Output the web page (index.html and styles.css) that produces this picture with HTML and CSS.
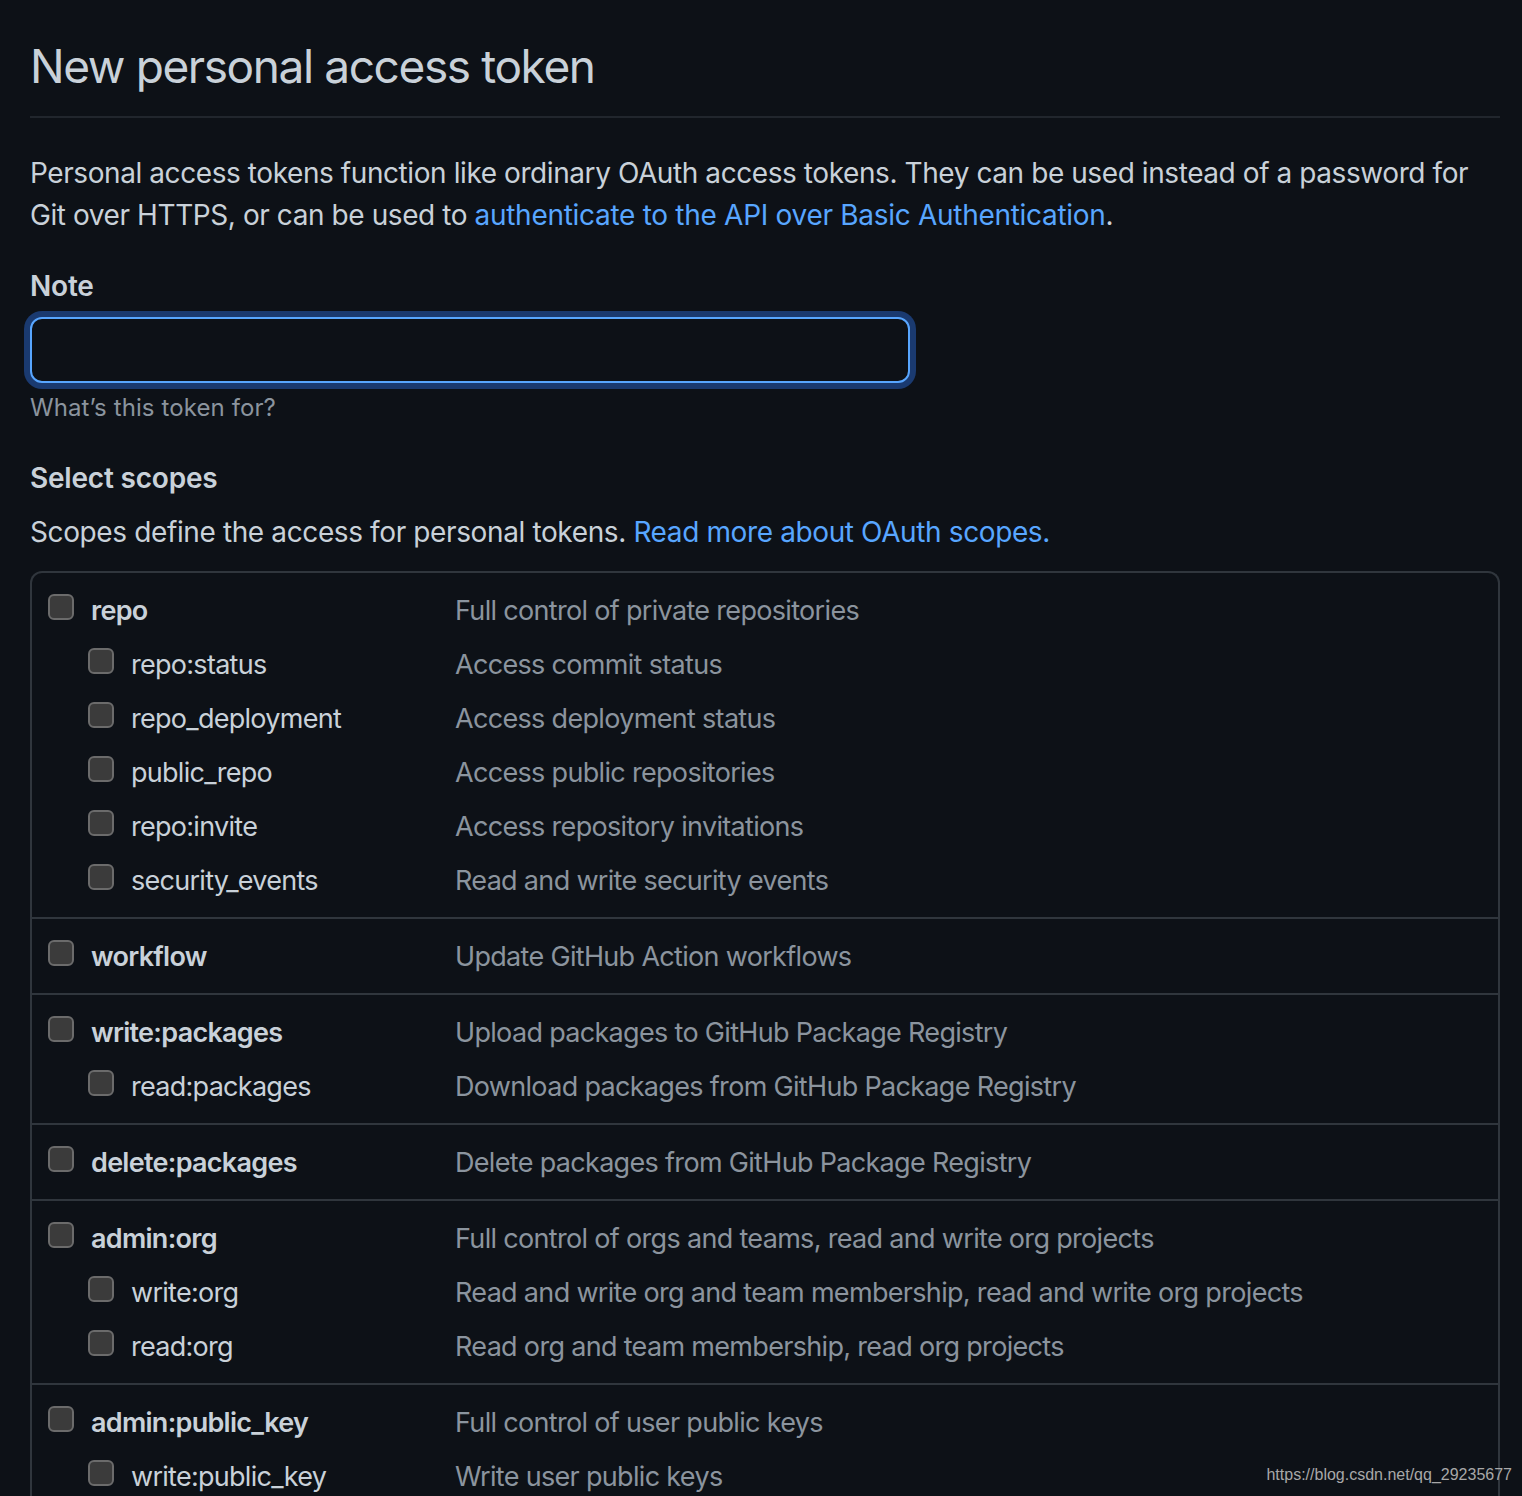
FILE: index.html
```html
<!DOCTYPE html>
<html lang="en">
<head>
<meta charset="utf-8">
<title>New personal access token</title>
<link rel="stylesheet" href="styles.css">
</head>
<body>
<main class="page">
  <h1 class="title">New personal access token</h1>
  <p class="intro">Personal access tokens function like ordinary OAuth access tokens. They can be used instead of a password for Git over HTTPS, or can be used to <a class="intro-link" href="#">authenticate to the API over Basic Authentication</a>.</p>

  <div class="field">
    <label class="label" for="note">Note</label>
    <input class="input" id="note" type="text">
    <p class="hint">What’s this token for?</p>
  </div>

  <h2 class="label scopes-title">Select scopes</h2>
  <p class="scopes-text">Scopes define the access for personal tokens. <a href="#">Read more about OAuth scopes.</a></p>

  <div class="scopes">
    <div class="group">
      <div class="row"><span class="cb"></span><span class="name main">repo</span><span class="desc">Full control of private repositories</span></div>
      <div class="row sub"><span class="cb"></span><span class="name">repo:status</span><span class="desc">Access commit status</span></div>
      <div class="row sub"><span class="cb"></span><span class="name">repo_deployment</span><span class="desc">Access deployment status</span></div>
      <div class="row sub"><span class="cb"></span><span class="name">public_repo</span><span class="desc">Access public repositories</span></div>
      <div class="row sub"><span class="cb"></span><span class="name">repo:invite</span><span class="desc">Access repository invitations</span></div>
      <div class="row sub"><span class="cb"></span><span class="name">security_events</span><span class="desc">Read and write security events</span></div>
    </div>
    <div class="group">
      <div class="row"><span class="cb"></span><span class="name main">workflow</span><span class="desc">Update GitHub Action workflows</span></div>
    </div>
    <div class="group">
      <div class="row"><span class="cb"></span><span class="name main">write:packages</span><span class="desc">Upload packages to GitHub Package Registry</span></div>
      <div class="row sub"><span class="cb"></span><span class="name">read:packages</span><span class="desc">Download packages from GitHub Package Registry</span></div>
    </div>
    <div class="group">
      <div class="row"><span class="cb"></span><span class="name main">delete:packages</span><span class="desc">Delete packages from GitHub Package Registry</span></div>
    </div>
    <div class="group">
      <div class="row"><span class="cb"></span><span class="name main">admin:org</span><span class="desc">Full control of orgs and teams, read and write org projects</span></div>
      <div class="row sub"><span class="cb"></span><span class="name">write:org</span><span class="desc">Read and write org and team membership, read and write org projects</span></div>
      <div class="row sub"><span class="cb"></span><span class="name">read:org</span><span class="desc">Read org and team membership, read org projects</span></div>
    </div>
    <div class="group">
      <div class="row"><span class="cb"></span><span class="name main">admin:public_key</span><span class="desc">Full control of user public keys</span></div>
      <div class="row sub"><span class="cb"></span><span class="name">write:public_key</span><span class="desc">Write user public keys</span></div>
    </div>
  </div>
</main>
<div class="watermark">https://blog.csdn.net/qq_29235677</div>
</body>
</html>
```
FILE: styles.css
```css
html, body {
  margin: 0;
  padding: 0;
  background: #0d1117;
  height: 1496px;
  overflow: hidden;
}
body {
  font-family: Inter, "Noto Sans", sans-serif;
  color: #c9d1d9;
  position: relative;
}
.page {
  padding: 0 22px 0 30px;
}
a {
  color: #58a6ff;
  text-decoration: none;
}
.title {
  margin: 0;
  padding-top: 36px;
  padding-bottom: 20px;
  font-size: 46px;
  font-weight: 400;
  line-height: 60px;
  letter-spacing: -1.4px;
  border-bottom: 2px solid #21262d;
}
.intro {
  margin: 34px 0 0;
  font-size: 28px;
  line-height: 42px;
  letter-spacing: -0.42px;
}
.intro-link {
  letter-spacing: -0.29px;
}
.field {
  margin-top: 30px;
}
.label {
  display: block;
  margin: 0;
  font-size: 28px;
  line-height: 40px;
  font-weight: 600;
  letter-spacing: -0.2px;
}
.input {
  display: block;
  box-sizing: border-box;
  width: 880px;
  height: 66px;
  margin: 11px 0 0;
  background: #0d1117;
  border: 2px solid #58a6ff;
  border-radius: 12px;
  box-shadow: 0 0 0 6px #1a3a70;
  outline: none;
}
.hint {
  margin: 9px 0 0;
  font-size: 24px;
  line-height: 32px;
  color: #8b949e;
  letter-spacing: 0.1px;
}
.scopes-title {
  margin-top: 34px;
}
.scopes-text {
  margin: 13px 0 0;
  font-size: 28px;
  line-height: 42px;
  letter-spacing: -0.38px;
}
.scopes {
  margin-top: 18px;
  border: 2px solid #30363d;
  border-radius: 12px 12px 0 0;
  border-bottom: none;
}
.group {
  padding: 10px 0;
}
.group + .group {
  border-top: 2px solid #30363d;
  margin: 0 -2px;
  padding-left: 2px;
  padding-right: 2px;
}
.row {
  display: flex;
  align-items: center;
  height: 54px;
  padding-left: 16px;
}
.row.sub {
  padding-left: 56px;
}
.cb {
  flex: none;
  box-sizing: border-box;
  width: 26px;
  height: 26px;
  border: 2px solid #6b6b6b;
  background: #3b3b3b;
  border-radius: 6px;
  margin-right: 17px;
  position: relative;
  top: -3px;
}
.name {
  flex: none;
  width: 364px;
  font-size: 27px;
  letter-spacing: -0.72px;
  color: #c9d1d9;
}
.row.sub .name {
  width: 324px;
}
.name.main {
  font-weight: 600;
}
.desc {
  font-size: 27px;
  letter-spacing: -0.68px;
  color: #8b949e;
  white-space: nowrap;
}
.watermark {
  position: absolute;
  right: 10px;
  top: 1466px;
  font-family: "Liberation Sans", Arial, sans-serif;
  font-size: 16px;
  color: #a8a8a8;
}
```
